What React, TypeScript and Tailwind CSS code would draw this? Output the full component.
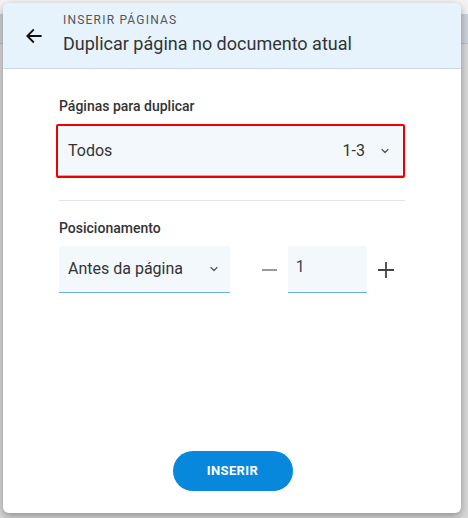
import React from "react";

function Chevron() {
  return (
    <svg width="12" height="12" viewBox="0 0 24 24" fill="none" stroke="#555" strokeWidth="2.5" strokeLinecap="round" strokeLinejoin="round">
      <path d="M6 9l6 6 6-6" />
    </svg>
  );
}

export default function App() {
  return (
    <div className="relative w-[468px] h-[518px] overflow-hidden bg-[#d9d9d9]" style={{ fontFamily: "Roboto, 'Liberation Sans', sans-serif" }}>
      {/* page behind the dialog */}
      <div className="absolute inset-x-0 top-0 h-[14px] bg-[#f3f3f3]" />
      <div className="absolute inset-x-0 top-[14px] h-[30px] bg-[#ccd3da] border-b border-[#bdbdbd]" />

      <div className="relative mt-[3px] ml-[3px] w-[458px] h-[510px] bg-white rounded-md shadow-[0_3px_8px_rgba(0,0,0,0.35)] overflow-hidden flex flex-col">
        <div className="h-[66px] bg-[#e6f3fd] border-b border-[#c9dbe8] flex items-center">
          <div className="w-[60px] flex justify-center pl-[2px]">
            <svg width="20" height="20" viewBox="0 0 24 24" fill="none" stroke="#111" strokeWidth="2.2" strokeLinecap="square">
              <path d="M20 12H5M11 5l-7 7 7 7" />
            </svg>
          </div>
          <div className="flex flex-col">
            <span className="text-[12px] tracking-[0.1em] text-[#555] leading-[14px] mt-[-4px]">INSERIR PÁGINAS</span>
            <span className="text-[18px] text-[#333] leading-[22px] mt-[6px]">Duplicar página no documento atual</span>
          </div>
        </div>

        <div className="flex-1 flex flex-col pl-[53px] pr-[56px]">
          <p className="mt-[29px] ml-[3px] text-[14px] font-medium text-[#333] leading-[16px]">Páginas para duplicar</p>
          <div className="mt-[10px] h-[54px] border-2 border-[#ee0000] rounded-[2px]">
            <div className="h-full bg-[#f3f8fc] border-b border-[#8fbde0] flex items-center pl-[10px] pr-[12px]">
              <span className="text-[16px] text-[#333] flex-1">Todos</span>
              <span className="text-[16px] text-[#333] mr-[14px]">1-3</span>
              <Chevron />
            </div>
          </div>

          <div className="mt-[22px] ml-[3px] h-px bg-[#e3e3e3]" />

          <p className="mt-[19px] ml-[3px] text-[14px] font-medium text-[#333] leading-[16px]">Posicionamento</p>
          <div className="mt-[10px] ml-[3px] flex items-center">
            <div className="w-[172px] h-[47px] bg-[#f3f8fc] rounded-t-[3px] border-b border-[#6aaee0] flex items-center pl-[9px] pr-[10px]">
              <span className="text-[16px] text-[#333] flex-1">Antes da página</span>
              <Chevron />
            </div>
            <div className="w-[58px] flex justify-start pl-[32px]">
              <div className="w-[15px] h-[2px] bg-[#999]" />
            </div>
            <div className="w-[80px] h-[47px] bg-[#f3f8fc] border-b border-[#6aaee0] flex items-start pl-[8px] pt-[12px]">
              <span className="text-[16px] text-[#444] leading-[18px]">1</span>
            </div>
            <div className="w-[38px] flex justify-center">
              <svg width="16" height="16" viewBox="0 0 16 16" stroke="#444" strokeWidth="1.8">
                <path d="M8 0v16M0 8h16" />
              </svg>
            </div>
          </div>

          <div className="flex-1" />
          <div className="flex justify-center mb-[22px]">
            <button type="button" className="w-[120px] h-[40px] ml-[4px] rounded-full bg-[#0788dd] text-white text-[13px] font-bold tracking-[0.03em]">
              INSERIR
            </button>
          </div>
        </div>
      </div>
    </div>
  );
}
